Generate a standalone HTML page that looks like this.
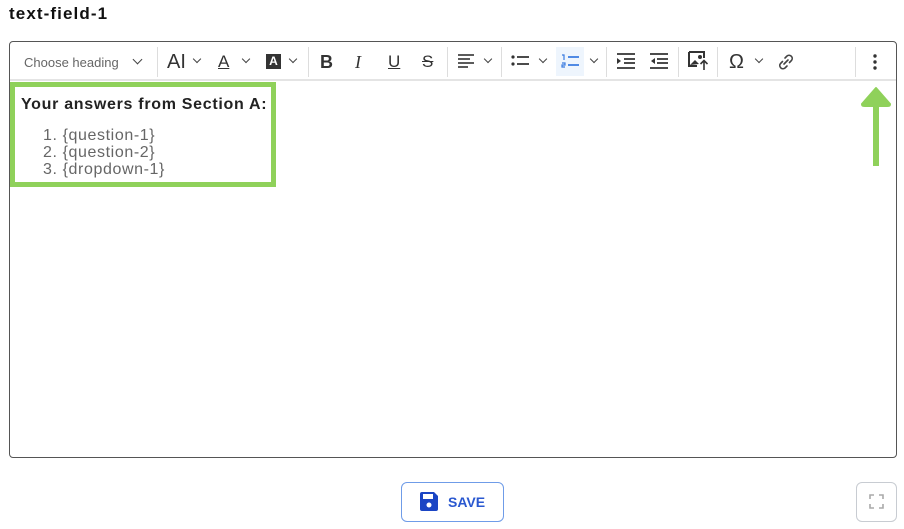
<!DOCTYPE html>
<html><head><style>
*{margin:0;padding:0;box-sizing:border-box}
body{width:904px;height:529px;background:#fff;font-family:"Liberation Sans",sans-serif;position:relative;overflow:hidden;color:#222}
.a{position:absolute}
.title{left:9px;top:4px;font-size:17px;font-weight:bold;color:#111;letter-spacing:1.1px}
.ed{left:9px;top:41px;width:888px;height:417px;border:1px solid #555;border-radius:4px}
.tb{left:10px;top:42px;width:886px;height:39px;border-bottom:2px solid #e4e4e4}
.sep{position:absolute;top:5px;width:1px;height:30px;background:#ddd}
.t{position:absolute;top:10px;font-size:20px;color:#333;line-height:20px}
.chev{position:absolute;top:14px;width:7px;height:7px;border-right:1.5px solid #444;border-bottom:1.5px solid #444;transform:rotate(45deg)}
.gb{left:10px;top:82px;width:266px;height:105px;border:5px solid #8fd15a}
</style></head><body>
<div class="a title">text-field-1</div>
<div class="a ed"></div>
<div class="a tb">
 <div class="t" style="left:14px;top:11px;font-size:13px;color:#666">Choose heading</div>
 <div class="chev" style="left:124px"></div>
 <div class="sep" style="left:147px"></div>
 <div class="t" style="left:157px;font-size:20px">AI</div><div class="chev" style="left:184px;width:6px;height:6px"></div>
 <div class="t" style="left:208px;font-size:17px;text-decoration:underline">A</div><div class="chev" style="left:233px;width:6px;height:6px"></div>
 <div class="a" style="left:256px;top:12px;width:15px;height:15px;background:#333;color:#fff;font-size:12px;text-align:center;line-height:15px;font-weight:bold">A</div><div class="chev" style="left:280px;width:6px;height:6px"></div>
 <div class="sep" style="left:298px"></div>
 <div class="t" style="left:310px;font-weight:bold;font-size:18px">B</div>
 <div class="t" style="left:345px;font-style:italic;font-size:18px;font-family:'Liberation Serif',serif">I</div>
 <div class="t" style="left:378px;font-size:17px;text-decoration:underline">U</div>
 <div class="t" style="left:412px;font-size:17px;text-decoration:line-through">S</div>
 <div class="sep" style="left:437px"></div>
 <svg class="a" style="left:448px;top:12px" width="16" height="14"><path d="M0 1h16M0 5h12M0 9h16M0 13h10" stroke="#444" stroke-width="1.8"/></svg><div class="chev" style="left:475px;width:6px;height:6px"></div>
 <div class="sep" style="left:491px"></div>
 <svg class="a" style="left:501px;top:12px" width="18" height="14"><circle cx="2" cy="3" r="1.6" fill="#333"/><circle cx="2" cy="10" r="1.6" fill="#333"/><path d="M6 3h12M6 10h12" stroke="#333" stroke-width="1.8"/></svg><div class="chev" style="left:530px;width:6px;height:6px"></div>
 <div class="a" style="left:546px;top:5px;width:28px;height:29px;background:#eef5fd"></div>
 <svg class="a" style="left:551px;top:12px" width="18" height="14"><path d="M1 1h2v5M1 9h3v2H1v2h3" stroke="#3a7be0" stroke-width="1.2" fill="none"/><path d="M7 3h11M7 11h11" stroke="#3a7be0" stroke-width="1.8"/></svg>
 <div class="chev" style="left:581px;width:6px;height:6px"></div>
 <div class="sep" style="left:596px"></div>
 <svg class="a" style="left:607px;top:11px" width="18" height="16"><path d="M0 1h18M7 6h11M7 10h11M0 15h18" stroke="#333" stroke-width="1.8"/><path d="M0 5l4 3-4 3z" fill="#333"/></svg>
 <svg class="a" style="left:640px;top:11px" width="18" height="16"><path d="M0 1h18M7 6h11M7 10h11M0 15h18" stroke="#333" stroke-width="1.8"/><path d="M5 5l-4 3 4 3z" fill="#333"/></svg>
 <div class="sep" style="left:668px"></div>
 <svg class="a" style="left:678px;top:9px" width="20" height="20"><path d="M1 1h15v6M1 1v14h8" stroke="#333" stroke-width="2" fill="none"/><path d="M2 14l5-5 4 4z" fill="#333"/><circle cx="12" cy="6" r="2" fill="#333"/><path d="M16 19v-9M12.5 13l3.5-3.5 3.5 3.5" stroke="#333" stroke-width="1.6" fill="none"/></svg>
 <div class="sep" style="left:707px"></div>
 <div class="t" style="left:719px;font-size:20px">Ω</div><div class="chev" style="left:746px;width:6px;height:6px"></div>
 <svg class="a" style="left:767px;top:11px" width="18" height="18"><path d="M8 5l2-2a3.2 3.2 0 0 1 4.5 4.5l-2 2M10 13l-2 2a3.2 3.2 0 0 1-4.5-4.5l2-2M7 11l4-4" stroke="#444" stroke-width="1.6" fill="none" stroke-linecap="round"/></svg>
 <div class="sep" style="left:845px"></div>
 <svg class="a" style="left:862px;top:12px" width="6" height="18"><circle cx="3" cy="2" r="1.7" fill="#333"/><circle cx="3" cy="8" r="1.7" fill="#333"/><circle cx="3" cy="14" r="1.7" fill="#333"/></svg>
</div>
<div class="a gb"></div>
<div class="a" style="left:21px;top:96px;font-size:16px;font-weight:bold;color:#222;letter-spacing:0.7px">Your answers from Section A:</div>
<div class="a" style="left:43px;top:127px;font-size:16px;line-height:17px;color:#666;letter-spacing:0.6px">1. {question-1}<br>2. {question-2}<br>3. {dropdown-1}</div>
<svg class="a" style="left:860px;top:85px" width="32" height="84"><path d="M16 3L2 19c0 2 1 2 3 2h22c2 0 3 0 3-2z" fill="#8fd15a" stroke="#8fd15a" stroke-linejoin="round" stroke-width="2"/><rect x="13" y="18" width="6" height="63" fill="#8fd15a"/></svg>
<div class="a" style="left:401px;top:482px;width:103px;height:40px;border:1.5px solid #6f9ce8;border-radius:6px"></div>
<svg class="a" style="left:420px;top:492px" width="18" height="19"><path d="M2 0h12l4 4v13a2 2 0 0 1-2 2H2a2 2 0 0 1-2-2V2a2 2 0 0 1 2-2z" fill="#1b45c4"/><rect x="3" y="2" width="10" height="5" fill="#fff"/><circle cx="9" cy="13" r="2.5" fill="#fff"/></svg>
<div class="a" style="left:448px;top:494px;font-size:14px;font-weight:bold;color:#2a58d0">SAVE</div>
<div class="a" style="left:856px;top:482px;width:41px;height:40px;border:1.5px solid #c8ccd2;border-radius:6px"></div>
<svg class="a" style="left:869px;top:494px" width="15" height="15"><path d="M1 5V1h4M10 1h4v4M14 10v4h-4M5 14H1v-4" stroke="#aaa" stroke-width="1.6" fill="none"/></svg>
</body></html>
